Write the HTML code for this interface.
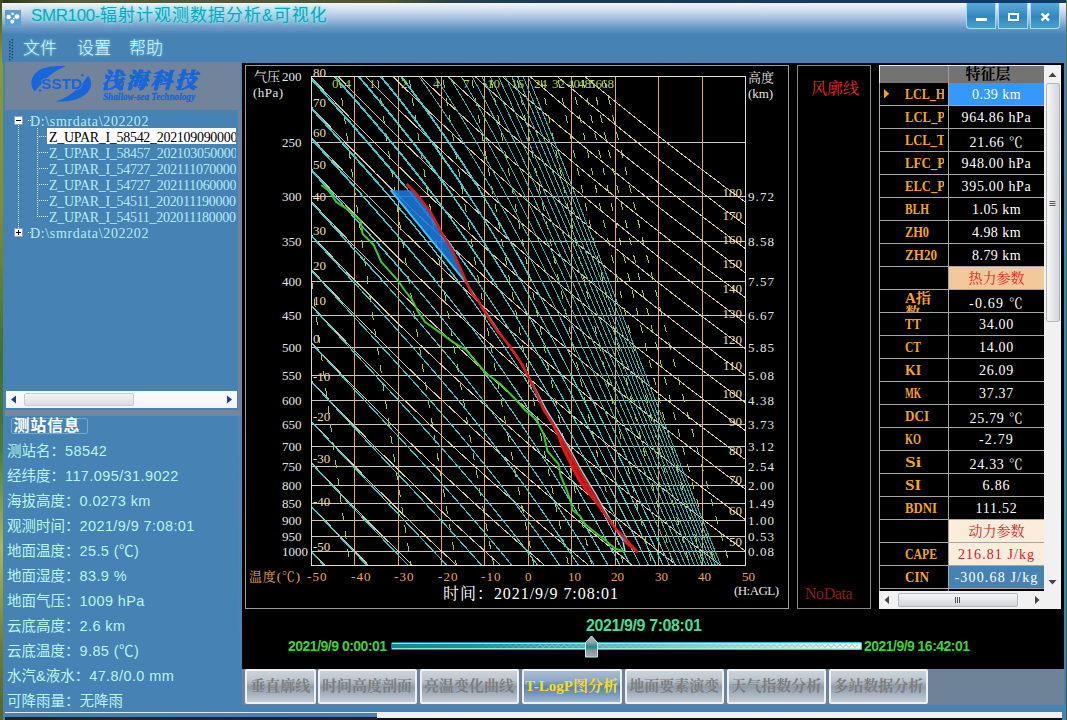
<!DOCTYPE html><html><head><meta charset="utf-8"><title>SMR100</title><style>
html,body{margin:0;padding:0}
body{width:1067px;height:720px;overflow:hidden;position:relative;background:#4682b4;font-family:'Liberation Sans','Noto Sans CJK SC',sans-serif}
.a{position:absolute}
.t{position:absolute;white-space:nowrap}
</style></head><body>
<div class="a" style="left:0;top:0;width:1067px;height:3px;background:linear-gradient(90deg,#2c3418 0,#58603a 6%,#4e5634 36%,#2a4048 42%,#173a5e 50%,#15386a 100%)"></div>
<div class="a" style="left:0;top:0;width:2.5px;height:720px;background:linear-gradient(#3a4a20 0,#8a9a38 8%,#7d8e34 30%,#3f6f34 50%,#4a7a38 62%,#a8b860 76%,#6d7d2c 90%,#55652c 100%)"></div>
<div class="a" style="left:1065.5px;top:0;width:2px;height:720px;background:linear-gradient(#5c7a2a,#4a5a3c)"></div>
<div class="a" style="left:2px;top:3px;width:1063.5px;height:31px;background:linear-gradient(#f4f7f0 0,#e4ecf4 10%,#c4d6ea 32%,#9dbadb 55%,#6a9ac8 78%,#4c86b8 100%)"></div>
<div class="a" style="left:5px;top:10px;width:16px;height:16px;background:#5d9fcb"></div>
<svg class="a" style="left:5px;top:10px" width="16" height="16"><circle cx="3.6" cy="7" r="2.2" fill="#fff"/><circle cx="12" cy="6.6" r="2.4" fill="#fff"/><circle cx="7.3" cy="11.6" r="2.1" fill="#e8f2fa"/><circle cx="7.6" cy="3.8" r="1.4" fill="#e8f2fa"/><circle cx="8.8" cy="8.6" r="1" fill="#dcebf6"/></svg>
<div class="t" style="left:31px;top:5px;font-size:17px;line-height:22px;color:#14a2ba;letter-spacing:1px;text-shadow:0 0 3px #7feaf4,0 0 4px #7feaf4"><span style="letter-spacing:-0.4px">SMR100-</span>辐射计观测数据分析<span style="letter-spacing:0;font-size:16px">&amp;</span><span style="margin-left:1px">可视化</span></div>
<div class="a" style="left:966px;top:3px;width:28px;height:25px;border:1px solid #9fe0f4;border-top:0;box-sizing:content-box;border-radius:0 0 0 4px;background:linear-gradient(#58acd8,#3a8ec4 45%,#3186be 55%,#4a9fd0)"></div>
<div class="a" style="left:998px;top:3px;width:28px;height:25px;border:1px solid #9fe0f4;border-top:0;box-sizing:content-box;border-radius:0;background:linear-gradient(#58acd8,#3a8ec4 45%,#3186be 55%,#4a9fd0)"></div>
<div class="a" style="left:1030px;top:3px;width:28px;height:25px;border:1px solid #9fe0f4;border-top:0;box-sizing:content-box;border-radius:0 0 4px 0;background:linear-gradient(#58acd8,#3a8ec4 45%,#3186be 55%,#4a9fd0)"></div>
<div class="a" style="left:976px;top:18px;width:11px;height:3px;background:#fff"></div>
<div class="a" style="left:1008px;top:13px;width:7px;height:4px;border:2px solid #fff"></div>
<svg class="a" style="left:1040px;top:13px" width="11" height="9"><path d="M1.500 0.500L9 7.500M9 0.500L1.500 7.500" stroke="#fff" stroke-width="2.400" fill="none"/></svg>
<div class="a" style="left:2px;top:34px;width:1063.5px;height:29px;background:#4682b4"></div>
<svg class="a" style="left:8px;top:38px" width="8" height="24"><rect x="1" y="3" width="1.4" height="1.4" fill="#1d3c66"/><rect x="3.6" y="1" width="1.4" height="1.4" fill="#1d3c66"/><rect x="1" y="6" width="1.4" height="1.4" fill="#1d3c66"/><rect x="3.6" y="4" width="1.4" height="1.4" fill="#1d3c66"/><rect x="1" y="9" width="1.4" height="1.4" fill="#1d3c66"/><rect x="3.6" y="7" width="1.4" height="1.4" fill="#1d3c66"/><rect x="1" y="12" width="1.4" height="1.4" fill="#1d3c66"/><rect x="3.6" y="10" width="1.4" height="1.4" fill="#1d3c66"/><rect x="1" y="15" width="1.4" height="1.4" fill="#1d3c66"/><rect x="3.6" y="13" width="1.4" height="1.4" fill="#1d3c66"/><rect x="1" y="18" width="1.4" height="1.4" fill="#1d3c66"/><rect x="3.6" y="16" width="1.4" height="1.4" fill="#1d3c66"/><rect x="1" y="21" width="1.4" height="1.4" fill="#1d3c66"/><rect x="3.6" y="19" width="1.4" height="1.4" fill="#1d3c66"/></svg>
<div class="t" style="left:23px;top:38px;font-size:17px;font-weight:300;line-height:22px;color:#d2f8ff;text-shadow:0 0 3px #8fe8ff">文件</div>
<div class="t" style="left:77px;top:38px;font-size:17px;font-weight:300;line-height:22px;color:#d2f8ff;text-shadow:0 0 3px #8fe8ff">设置</div>
<div class="t" style="left:129px;top:38px;font-size:17px;font-weight:300;line-height:22px;color:#d2f8ff;text-shadow:0 0 3px #8fe8ff">帮助</div>
<div class="a" style="left:5px;top:62px;width:236px;height:48px;background:#72849c"></div>
<div class="a" style="left:238px;top:110px;width:3.5px;height:602px;background:linear-gradient(#72849c 0,#72849c 50.5%,#5a84ae 51%,#4f83b2 80%,#4682b4 90%)"></div>
<svg class="a" style="left:5px;top:63px" width="236" height="47">
<g fill="#1766dc">
<path d="M29.7 28.4 C24.5 22 25 14 33 8 C40 3.600 50 2.800 61 3.200 C52 6.500 46 11 41.500 15.500 C37 20 33.500 24.500 29.700 28.400 Z"/>
<path d="M83 12.800 C87.500 17.500 88 25 80.500 31.500 C73 37.500 62 39 50.500 38.500 C59 36 66 31.500 71.500 26.500 C76.500 22 80 17 83 12.800 Z"/>
<circle cx="35" cy="27.600" r="1.25"/><circle cx="77.300" cy="12.200" r="1.25"/>
<text x="36" y="26.400" font-family="'Liberation Sans',sans-serif" font-size="15.500" font-weight="bold" textLength="41" stroke="#72849c" stroke-width="1.400" paint-order="stroke" stroke-linejoin="round">SSTD</text>
<text x="96.500" y="25" font-family="'Liberation Serif','Noto Serif CJK SC',serif" font-size="21.500" font-weight="900" font-style="italic" textLength="95" lengthAdjust="spacing" stroke="#1766dc" stroke-width="0.900">浅海科技</text>
<text x="98" y="37" font-family="'Liberation Serif',serif" font-size="10" font-weight="bold" font-style="italic" textLength="92" lengthAdjust="spacingAndGlyphs" stroke="#1766dc" stroke-width="0.300">Shallow-sea Technology</text>
</g></svg>
<div class="a" style="left:5px;top:110px;width:233px;height:281px;background:#4682b4;overflow:hidden"></div>
<svg class="a" style="left:5px;top:110px" width="233" height="281" shape-rendering="crispEdges"><path d="M13.5 15V122M23 10.5H27M32 26.500H43M32.500 18V107M32 42.500H43M32 58.500H43M32 74.500H43M32 90.500H43M32 106.500H43M23 122.500H27" stroke="#e6eef6" stroke-width="1" stroke-dasharray="1 1" fill="none"/><rect x="9.500" y="6.500" width="8" height="8" fill="#fff" stroke="#93a4b8"/><path d="M11 10.500H16" stroke="#000"/><rect x="9.500" y="118.500" width="8" height="8" fill="#fff" stroke="#93a4b8"/><path d="M11 122.500H16M13.500 120V125" stroke="#000"/></svg>
<div class="t" style="left:30px;top:114px;font-family:'Liberation Serif','Noto Serif CJK SC',serif;font-size:14px;line-height:16px;letter-spacing:-0.3px;letter-spacing:0.65px;color:#b4ecf6">D:\smrdata\202202</div>
<div class="a" style="left:47px;top:128px;width:189px;height:16px;background:#fff"></div>
<div class="t" style="left:49px;top:130px;width:187px;overflow:hidden;font-family:'Liberation Serif','Noto Serif CJK SC',serif;font-size:14px;line-height:16px;letter-spacing:-0.3px;color:#000">Z_UPAR_I_58542_202109090000</div>
<div class="t" style="left:49px;top:146px;width:187px;overflow:hidden;font-family:'Liberation Serif','Noto Serif CJK SC',serif;font-size:14px;line-height:16px;letter-spacing:-0.3px;color:#b4ecf6">Z_UPAR_I_58457_202103050000</div>
<div class="t" style="left:49px;top:162px;width:187px;overflow:hidden;font-family:'Liberation Serif','Noto Serif CJK SC',serif;font-size:14px;line-height:16px;letter-spacing:-0.3px;color:#b4ecf6">Z_UPAR_I_54727_202111070000</div>
<div class="t" style="left:49px;top:178px;width:187px;overflow:hidden;font-family:'Liberation Serif','Noto Serif CJK SC',serif;font-size:14px;line-height:16px;letter-spacing:-0.3px;color:#b4ecf6">Z_UPAR_I_54727_202111060000</div>
<div class="t" style="left:49px;top:194px;width:187px;overflow:hidden;font-family:'Liberation Serif','Noto Serif CJK SC',serif;font-size:14px;line-height:16px;letter-spacing:-0.3px;color:#b4ecf6">Z_UPAR_I_54511_202011190000</div>
<div class="t" style="left:49px;top:210px;width:187px;overflow:hidden;font-family:'Liberation Serif','Noto Serif CJK SC',serif;font-size:14px;line-height:16px;letter-spacing:-0.3px;color:#b4ecf6">Z_UPAR_I_54511_202011180000</div>
<div class="t" style="left:30px;top:226px;font-family:'Liberation Serif','Noto Serif CJK SC',serif;font-size:14px;line-height:16px;letter-spacing:-0.3px;letter-spacing:0.65px;color:#b4ecf6">D:\smrdata\202202</div>
<div class="a" style="left:6px;top:391px;width:231px;height:17px;background:linear-gradient(#fdfdfd,#f2f3f5)"></div>
<div class="a" style="left:24px;top:393px;width:110px;height:13px;border-radius:2px;border:1px solid #c9ccd2;box-sizing:border-box;background:linear-gradient(#f4f4f5,#dcdde0)"></div>
<svg class="a" style="left:6px;top:391px" width="231" height="17"><path d="M10 4.5L5 8.500L10 12.500Z M221 4.500L226 8.500L221 12.500Z" fill="#1f3f86"/></svg>
<div class="a" style="left:5px;top:410px;width:236px;height:5.5px;background:#77869d"></div>
<div class="a" style="left:11px;top:417.5px;width:77px;height:16px;border:1px solid #6fabca;box-sizing:border-box;border-radius:2px"></div>
<div class="t" style="left:13.5px;top:415px;font-size:16px;font-weight:bold;line-height:22px;color:#fff;letter-spacing:0.7px">测站信息</div>
<div class="t" style="left:7px;top:440px;font-size:14.5px;line-height:22px;color:#b8f6ee">测站名：<span style="letter-spacing:0.4px">58542</span></div>
<div class="t" style="left:7px;top:465px;font-size:14.5px;line-height:22px;color:#b8f6ee">经纬度：<span style="letter-spacing:0.4px">117.095/31.9022</span></div>
<div class="t" style="left:7px;top:490px;font-size:14.5px;line-height:22px;color:#b8f6ee">海拔高度：<span style="letter-spacing:0.4px">0.0273 km</span></div>
<div class="t" style="left:7px;top:515px;font-size:14.5px;line-height:22px;color:#b8f6ee">观测时间：<span style="letter-spacing:0.4px">2021/9/9 7:08:01</span></div>
<div class="t" style="left:7px;top:540px;font-size:14.5px;line-height:22px;color:#b8f6ee">地面温度：<span style="letter-spacing:0.4px">25.5 (℃)</span></div>
<div class="t" style="left:7px;top:565px;font-size:14.5px;line-height:22px;color:#b8f6ee">地面湿度：<span style="letter-spacing:0.4px">83.9 %</span></div>
<div class="t" style="left:7px;top:590px;font-size:14.5px;line-height:22px;color:#b8f6ee">地面气压：<span style="letter-spacing:0.4px">1009 hPa</span></div>
<div class="t" style="left:7px;top:615px;font-size:14.5px;line-height:22px;color:#b8f6ee">云底高度：<span style="letter-spacing:0.4px">2.6 km</span></div>
<div class="t" style="left:7px;top:640px;font-size:14.5px;line-height:22px;color:#b8f6ee">云底温度：<span style="letter-spacing:0.4px">9.85 (℃)</span></div>
<div class="t" style="left:7px;top:665px;font-size:14.5px;line-height:22px;color:#b8f6ee">水汽&amp;液水：<span style="letter-spacing:0.4px">47.8/0.0 mm</span></div>
<div class="t" style="left:7px;top:690px;font-size:14.5px;line-height:22px;color:#b8f6ee">可降雨量：无降雨</div>
<div class="a" style="left:242px;top:63px;width:822px;height:606px;background:#000"></div>
<div class="a" style="left:245px;top:65px;width:544px;height:544px;border:1px solid #9a9a9a;box-sizing:border-box"></div>
<div class="a" style="left:797px;top:65px;width:74px;height:544px;border:1px solid #8a8a8a;box-sizing:border-box"></div>
<div class="t" style="left:811px;top:78px;font-family:'Liberation Serif','Noto Serif CJK SC',serif;font-size:16px;line-height:22px;color:#e42a2a">风廓线</div>
<div class="t" style="left:805px;top:583px;font-family:'Liberation Serif','Noto Serif CJK SC',serif;font-size:16px;line-height:22px;color:#8e1c1c;letter-spacing:-0.45px">NoData</div>
<svg class="a" style="left:0;top:0" width="1067" height="720" font-family="'Liberation Serif','Noto Serif CJK SC',serif"><path d="M311.3 142.5H745.5M311.3 196.5H745.5M311.3 241.5H745.5M311.3 281.5H745.5M311.3 315.5H745.5M311.3 347.5H745.5M311.3 375.5H745.5M311.3 400.5H745.5M311.3 424.5H745.5M311.3 446.5H745.5M311.3 466.5H745.5M311.3 485.5H745.5M311.3 503.5H745.5M311.3 520.5H745.5M311.3 536.5H745.5M311.3 551.5H745.5" stroke="#ccc8c0" stroke-width="1" fill="none" shape-rendering="crispEdges"/>
<path d="M354.5 76.0V565.0M398.5 76.0V565.0M441.5 76.0V565.0M484.5 76.0V565.0M528.5 76.0V565.0M571.5 76.0V565.0M615.5 76.0V565.0M658.5 76.0V565.0M702.5 76.0V565.0" stroke="#eea25a" stroke-width="1" fill="none" shape-rendering="crispEdges"/>
<path d="M311.3 551.3L313.3 553.4L324.3 565.0M311.3 506.0L321.4 516.7L333.1 528.9L344.9 541.2L356.8 553.4L368.3 565.0M311.3 462.6L316.1 467.7L327.7 480.0L339.5 492.2L351.4 504.5L363.4 516.7L375.6 528.9L387.9 541.2L400.4 553.4L412.3 565.0M311.3 421.0L320.7 431.0L332.4 443.3L344.2 455.5L356.1 467.7L368.2 480.0L380.5 492.2L392.8 504.5L405.4 516.7L418.1 528.9L430.9 541.2L443.9 553.4L456.3 565.0M311.3 381.0L312.3 382.0L323.8 394.3L335.5 406.5L347.4 418.8L359.4 431.0L371.5 443.3L383.8 455.5L396.2 467.7L408.8 480.0L421.5 492.2L434.3 504.5L447.4 516.7L460.5 528.9L473.9 541.2L487.4 553.4L500.3 565.0M311.3 342.5L313.9 345.3L325.5 357.6L337.2 369.8L349.1 382.0L361.1 394.3L373.3 406.5L385.6 418.8L398.0 431.0L410.6 443.3L423.3 455.5L436.2 467.7L449.3 480.0L462.5 492.2L475.8 504.5L489.4 516.7L503.0 528.9L516.9 541.2L530.9 553.4L544.3 565.0M311.3 305.4L314.3 308.6L325.9 320.8L337.6 333.1L349.5 345.3L361.5 357.6L373.7 369.8L386.0 382.0L398.4 394.3L411.0 406.5L423.8 418.8L436.7 431.0L449.7 443.3L462.9 455.5L476.3 467.7L489.8 480.0L503.5 492.2L517.3 504.5L531.4 516.7L545.5 528.9L559.9 541.2L574.4 553.4L588.3 565.0M311.3 269.5L313.5 271.9L325.1 284.1L336.8 296.4L348.6 308.6L360.6 320.8L372.8 333.1L385.1 345.3L397.5 357.6L410.1 369.8L422.8 382.0L435.7 394.3L448.8 406.5L461.9 418.8L475.3 431.0L488.8 443.3L502.5 455.5L516.3 467.7L530.3 480.0L544.5 492.2L558.8 504.5L573.3 516.7L588.0 528.9L602.9 541.2L617.9 553.4L632.3 565.0M311.3 234.9L311.5 235.1L323.1 247.4L334.8 259.6L346.6 271.9L358.6 284.1L370.7 296.4L383.0 308.6L395.4 320.8L407.9 333.1L420.6 345.3L433.5 357.6L446.5 369.8L459.7 382.0L473.0 394.3L486.5 406.5L500.1 418.8L513.9 431.0L527.9 443.3L542.1 455.5L556.4 467.7L570.8 480.0L585.5 492.2L600.3 504.5L615.3 516.7L630.5 528.9L645.9 541.2L661.4 553.4L676.3 565.0M311.3 201.4L320.0 210.7L331.7 222.9L343.5 235.1L355.4 247.4L367.5 259.6L379.7 271.9L392.1 284.1L404.6 296.4L417.3 308.6L430.1 320.8L443.1 333.1L456.2 345.3L469.5 357.6L482.9 369.8L496.5 382.0L510.3 394.3L524.2 406.5L538.3 418.8L552.6 431.0L567.0 443.3L581.6 455.5L596.4 467.7L611.4 480.0L626.5 492.2L641.8 504.5L657.3 516.7L673.0 528.9L688.9 541.2L704.9 553.4L720.3 565.0M311.3 168.9L316.0 173.9L327.6 186.2L339.3 198.4L351.2 210.7L363.3 222.9L375.4 235.1L387.8 247.4L400.2 259.6L412.9 271.9L425.6 284.1L438.5 296.4L451.6 308.6L464.8 320.8L478.2 333.1L491.8 345.3L505.5 357.6L519.4 369.8L533.4 382.0L547.6 394.3L562.0 406.5L576.5 418.8L591.2 431.0L606.1 443.3L621.2 455.5L636.5 467.7L651.9 480.0L667.5 492.2L683.3 504.5L699.3 516.7L715.5 528.9L731.9 541.2L745.5 551.3M311.3 137.5L322.6 149.5L334.3 161.7L346.1 173.9L358.1 186.2L370.2 198.4L382.5 210.7L394.9 222.9L407.4 235.1L420.1 247.4L433.0 259.6L446.0 271.9L459.1 284.1L472.5 296.4L485.9 308.6L499.6 320.8L513.4 333.1L527.3 345.3L541.5 357.6L555.8 369.8L570.3 382.0L584.9 394.3L599.7 406.5L614.7 418.8L629.9 431.0L645.2 443.3L660.8 455.5L676.5 467.7L692.4 480.0L708.5 492.2L724.8 504.5L741.3 516.7L745.5 519.8M311.3 106.9L316.7 112.7L328.4 125.0L340.1 137.2L352.0 149.5L364.1 161.7L376.2 173.9L388.6 186.2L401.1 198.4L413.7 210.7L426.5 222.9L439.4 235.1L452.5 247.4L465.7 259.6L479.1 271.9L492.7 284.1L506.4 296.4L520.3 308.6L534.3 320.8L548.5 333.1L562.9 345.3L577.5 357.6L592.2 369.8L607.1 382.0L622.2 394.3L637.5 406.5L652.9 418.8L668.5 431.0L684.4 443.3L700.4 455.5L716.6 467.7L732.9 480.0L745.5 489.2M311.3 77.3L321.6 88.2L333.3 100.5L345.1 112.7L357.1 125.0L369.2 137.2L381.4 149.5L393.8 161.7L406.4 173.9L419.1 186.2L431.9 198.4L444.9 210.7L458.0 222.9L471.4 235.1L484.8 247.4L498.4 259.6L512.2 271.9L526.2 284.1L540.3 296.4L554.6 308.6L569.0 320.8L583.7 333.1L598.5 345.3L613.5 357.6L628.6 369.8L644.0 382.0L659.5 394.3L675.2 406.5L691.1 418.8L707.2 431.0L723.5 443.3L739.9 455.5L745.5 459.6M337.5 76.0L349.4 88.2L361.4 100.5L373.5 112.7L385.8 125.0L398.3 137.2L410.9 149.5L423.6 161.7L436.5 173.9L449.5 186.2L462.8 198.4L476.1 210.7L489.6 222.9L503.3 235.1L517.2 247.4L531.2 259.6L545.4 271.9L559.7 284.1L574.2 296.4L588.9 308.6L603.8 320.8L618.8 333.1L634.1 345.3L649.5 357.6L665.0 369.8L680.8 382.0L696.8 394.3L712.9 406.5L729.3 418.8L745.5 430.8M364.9 76.0L377.1 88.2L389.4 100.5L401.9 112.7L414.6 125.0L427.3 137.2L440.3 149.5L453.4 161.7L466.6 173.9L480.0 186.2L493.6 198.4L507.3 210.7L521.2 222.9L535.3 235.1L549.5 247.4L563.9 259.6L578.5 271.9L593.2 284.1L608.1 296.4L623.2 308.6L638.5 320.8L654.0 333.1L669.6 345.3L685.5 357.6L701.5 369.8L717.7 382.0L734.1 394.3L745.5 402.7M392.3 76.0L404.8 88.2L417.5 100.5L430.3 112.7L443.3 125.0L456.4 137.2L469.7 149.5L483.2 161.7L496.8 173.9L510.5 186.2L524.5 198.4L538.6 210.7L552.8 222.9L567.3 235.1L581.9 247.4L596.7 259.6L611.6 271.9L626.7 284.1L642.1 296.4L657.6 308.6L673.3 320.8L689.1 333.1L705.2 345.3L721.4 357.6L737.9 369.8L745.5 375.4M419.7 76.0L432.5 88.2L445.5 100.5L458.7 112.7L472.0 125.0L485.5 137.2L499.1 149.5L512.9 161.7L526.9 173.9L541.0 186.2L555.3 198.4L569.8 210.7L584.4 222.9L599.2 235.1L614.2 247.4L629.4 259.6L644.7 271.9L660.3 284.1L676.0 296.4L691.9 308.6L708.0 320.8L724.3 333.1L740.8 345.3L745.5 348.8M447.1 76.0L460.3 88.2L473.6 100.5L487.1 112.7L500.8 125.0L514.6 137.2L528.5 149.5L542.7 161.7L557.0 173.9L571.5 186.2L586.2 198.4L601.0 210.7L616.0 222.9L631.2 235.1L646.6 247.4L662.1 259.6L677.9 271.9L693.8 284.1L709.9 296.4L726.2 308.6L742.7 320.8L745.5 322.9M474.5 76.0L488.0 88.2L501.7 100.5L515.5 112.7L529.5 125.0L543.6 137.2L558.0 149.5L572.5 161.7L587.1 173.9L602.0 186.2L617.0 198.4L632.2 210.7L647.6 222.9L663.2 235.1L678.9 247.4L694.9 259.6L711.0 271.9L727.3 284.1L743.8 296.4L745.5 297.6M501.9 76.0L515.7 88.2L529.7 100.5L543.9 112.7L558.2 125.0L572.7 137.2L587.4 149.5L602.2 161.7L617.3 173.9L632.5 186.2L647.9 198.4L663.4 210.7L679.2 222.9L695.1 235.1L711.3 247.4L727.6 259.6L744.1 271.9L745.5 272.9M529.3 76.0L543.5 88.2L557.8 100.5L572.3 112.7L587.0 125.0L601.8 137.2L616.8 149.5L632.0 161.7L647.4 173.9L663.0 186.2L678.7 198.4L694.7 210.7L710.8 222.9L727.1 235.1L743.6 247.4L745.5 248.8M556.7 76.0L571.2 88.2L585.8 100.5L600.7 112.7L615.7 125.0L630.9 137.2L646.2 149.5L661.8 161.7L677.5 173.9L693.5 186.2L709.6 198.4L725.9 210.7L742.4 222.9L745.5 225.2M584.1 76.0L598.9 88.2L613.9 100.5L629.1 112.7L644.4 125.0L659.9 137.2L675.7 149.5L691.6 161.7L707.7 173.9L723.9 186.2L740.4 198.4L745.5 202.2" stroke="#d8c8a2" stroke-width="1" fill="none" shape-rendering="crispEdges"/>
<path d="M311.3 277.3L312.2 284.1L313.7 296.4L315.3 308.6L316.9 320.8L318.5 333.1L320.1 345.3L321.7 357.6L323.3 369.8L324.9 382.0L326.5 394.3L328.2 406.5L329.8 418.8L331.4 431.0L333.1 443.3L334.7 455.5L336.4 467.7L338.1 480.0L339.7 492.2L341.4 504.5L343.1 516.7L344.8 528.9L346.5 541.2L348.2 553.4L349.8 565.0M338.8 76.0L340.4 88.2L342.1 100.5L343.8 112.7L345.5 125.0L347.2 137.2L348.9 149.5L350.6 161.7L352.3 173.9L354.1 186.2L355.8 198.4L357.5 210.7L359.3 222.9L361.0 235.1L362.8 247.4L364.6 259.6L366.4 271.9L368.1 284.1L369.9 296.4L371.7 308.6L373.5 320.8L375.3 333.1L377.2 345.3L379.0 357.6L380.8 369.8L382.6 382.0L384.5 394.3L386.4 406.5L388.2 418.8L390.1 431.0L392.0 443.3L393.8 455.5L395.7 467.7L397.6 480.0L399.5 492.2L401.5 504.5L403.4 516.7L405.3 528.9L407.3 541.2L409.2 553.4L411.1 565.0M377.3 76.0L379.1 88.2L381.0 100.5L382.8 112.7L384.6 125.0L386.5 137.2L388.4 149.5L390.2 161.7L392.1 173.9L394.0 186.2L395.9 198.4L397.8 210.7L399.7 222.9L401.6 235.1L403.5 247.4L405.5 259.6L407.4 271.9L409.4 284.1L411.3 296.4L413.3 308.6L415.3 320.8L417.2 333.1L419.2 345.3L421.2 357.6L423.2 369.8L425.3 382.0L427.3 394.3L429.3 406.5L431.4 418.8L433.4 431.0L435.5 443.3L437.5 455.5L439.6 467.7L441.7 480.0L443.8 492.2L445.9 504.5L448.0 516.7L450.1 528.9L452.3 541.2L454.4 553.4L456.4 565.0M408.7 76.0L410.7 88.2L412.7 100.5L414.6 112.7L416.6 125.0L418.6 137.2L420.6 149.5L422.6 161.7L424.6 173.9L426.6 186.2L428.7 198.4L430.7 210.7L432.8 222.9L434.8 235.1L436.9 247.4L439.0 259.6L441.0 271.9L443.1 284.1L445.2 296.4L447.3 308.6L449.5 320.8L451.6 333.1L453.7 345.3L455.9 357.6L458.0 369.8L460.2 382.0L462.4 394.3L464.6 406.5L466.7 418.8L469.0 431.0L471.2 443.3L473.4 455.5L475.6 467.7L477.9 480.0L480.1 492.2L482.4 504.5L484.7 516.7L486.9 528.9L489.2 541.2L491.5 553.4L493.7 565.0M442.4 76.0L444.5 88.2L446.6 100.5L448.7 112.7L450.8 125.0L453.0 137.2L455.1 149.5L457.3 161.7L459.4 173.9L461.6 186.2L463.8 198.4L466.0 210.7L468.2 222.9L470.4 235.1L472.6 247.4L474.8 259.6L477.1 271.9L479.3 284.1L481.6 296.4L483.8 308.6L486.1 320.8L488.4 333.1L490.7 345.3L493.0 357.6L495.4 369.8L497.7 382.0L500.0 394.3L502.4 406.5L504.8 418.8L507.1 431.0L509.5 443.3L511.9 455.5L514.3 467.7L516.7 480.0L519.2 492.2L521.6 504.5L524.1 516.7L526.5 528.9L529.0 541.2L531.5 553.4L533.9 565.0M471.2 76.0L473.5 88.2L475.7 100.5L477.9 112.7L480.2 125.0L482.4 137.2L484.7 149.5L487.0 161.7L489.3 173.9L491.6 186.2L493.9 198.4L496.3 210.7L498.6 222.9L500.9 235.1L503.3 247.4L505.7 259.6L508.0 271.9L510.4 284.1L512.8 296.4L515.3 308.6L517.7 320.8L520.1 333.1L522.6 345.3L525.0 357.6L527.5 369.8L530.0 382.0L532.5 394.3L535.0 406.5L537.5 418.8L540.0 431.0L542.6 443.3L545.1 455.5L547.7 467.7L550.3 480.0L552.8 492.2L555.4 504.5L558.1 516.7L560.7 528.9L563.3 541.2L566.0 553.4L568.5 565.0M490.4 76.0L492.7 88.2L495.1 100.5L497.4 112.7L499.7 125.0L502.1 137.2L504.5 149.5L506.8 161.7L509.2 173.9L511.6 186.2L514.0 198.4L516.4 210.7L518.9 222.9L521.3 235.1L523.8 247.4L526.2 259.6L528.7 271.9L531.2 284.1L533.7 296.4L536.2 308.6L538.7 320.8L541.3 333.1L543.8 345.3L546.4 357.6L548.9 369.8L551.5 382.0L554.1 394.3L556.7 406.5L559.3 418.8L562.0 431.0L564.6 443.3L567.3 455.5L570.0 467.7L572.6 480.0L575.3 492.2L578.1 504.5L580.8 516.7L583.5 528.9L586.3 541.2L589.0 553.4L591.7 565.0M516.7 76.0L519.1 88.2L521.6 100.5L524.0 112.7L526.5 125.0L529.0 137.2L531.5 149.5L534.0 161.7L536.5 173.9L539.0 186.2L541.5 198.4L544.1 210.7L546.6 222.9L549.2 235.1L551.8 247.4L554.4 259.6L557.0 271.9L559.6 284.1L562.3 296.4L564.9 308.6L567.6 320.8L570.3 333.1L572.9 345.3L575.6 357.6L578.4 369.8L581.1 382.0L583.8 394.3L586.6 406.5L589.3 418.8L592.1 431.0L594.9 443.3L597.7 455.5L600.6 467.7L603.4 480.0L606.2 492.2L609.1 504.5L612.0 516.7L614.9 528.9L617.8 541.2L620.7 553.4L623.5 565.0M540.2 76.0L542.8 88.2L545.3 100.5L547.9 112.7L550.5 125.0L553.1 137.2L555.7 149.5L558.3 161.7L560.9 173.9L563.5 186.2L566.2 198.4L568.9 210.7L571.5 222.9L574.2 235.1L576.9 247.4L579.7 259.6L582.4 271.9L585.1 284.1L587.9 296.4L590.7 308.6L593.5 320.8L596.3 333.1L599.1 345.3L601.9 357.6L604.8 369.8L607.6 382.0L610.5 394.3L613.4 406.5L616.3 418.8L619.2 431.0L622.1 443.3L625.1 455.5L628.0 467.7L631.0 480.0L634.0 492.2L637.0 504.5L640.0 516.7L643.1 528.9L646.1 541.2L649.2 553.4L652.1 565.0M557.3 76.0L560.0 88.2L562.6 100.5L565.2 112.7L567.9 125.0L570.6 137.2L573.3 149.5L576.0 161.7L578.7 173.9L581.4 186.2L584.2 198.4L586.9 210.7L589.7 222.9L592.5 235.1L595.3 247.4L598.1 259.6L600.9 271.9L603.7 284.1L606.6 296.4L609.5 308.6L612.3 320.8L615.2 333.1L618.2 345.3L621.1 357.6L624.0 369.8L627.0 382.0L630.0 394.3L632.9 406.5L635.9 418.8L639.0 431.0L642.0 443.3L645.0 455.5L648.1 467.7L651.2 480.0L654.3 492.2L657.4 504.5L660.5 516.7L663.7 528.9L666.9 541.2L670.0 553.4L673.1 565.0M570.8 76.0L573.5 88.2L576.2 100.5L578.9 112.7L581.7 125.0L584.4 137.2L587.2 149.5L589.9 161.7L592.7 173.9L595.5 186.2L598.3 198.4L601.2 210.7L604.0 222.9L606.9 235.1L609.7 247.4L612.6 259.6L615.5 271.9L618.4 284.1L621.3 296.4L624.3 308.6L627.2 320.8L630.2 333.1L633.2 345.3L636.2 357.6L639.2 369.8L642.3 382.0L645.3 394.3L648.4 406.5L651.5 418.8L654.6 431.0L657.7 443.3L660.8 455.5L664.0 467.7L667.1 480.0L670.3 492.2L673.5 504.5L676.7 516.7L680.0 528.9L683.2 541.2L686.5 553.4L689.6 565.0M582.0 76.0L584.7 88.2L587.5 100.5L590.2 112.7L593.0 125.0L595.8 137.2L598.6 149.5L601.5 161.7L604.3 173.9L607.2 186.2L610.0 198.4L612.9 210.7L615.8 222.9L618.7 235.1L621.7 247.4L624.6 259.6L627.6 271.9L630.5 284.1L633.5 296.4L636.5 308.6L639.6 320.8L642.6 333.1L645.7 345.3L648.7 357.6L651.8 369.8L654.9 382.0L658.0 394.3L661.2 406.5L664.3 418.8L667.5 431.0L670.7 443.3L673.9 455.5L677.1 467.7L680.3 480.0L683.6 492.2L686.8 504.5L690.1 516.7L693.4 528.9L696.8 541.2L700.1 553.4L703.3 565.0M591.4 76.0L594.2 88.2L597.0 100.5L599.9 112.7L602.7 125.0L605.5 137.2L608.4 149.5L611.3 161.7L614.2 173.9L617.1 186.2L620.0 198.4L622.9 210.7L625.9 222.9L628.9 235.1L631.8 247.4L634.8 259.6L637.8 271.9L640.9 284.1L643.9 296.4L647.0 308.6L650.1 320.8L653.1 333.1L656.3 345.3L659.4 357.6L662.5 369.8L665.7 382.0L668.9 394.3L672.0 406.5L675.3 418.8L678.5 431.0L681.7 443.3L685.0 455.5L688.3 467.7L691.6 480.0L694.9 492.2L698.2 504.5L701.6 516.7L704.9 528.9L708.3 541.2L711.7 553.4L715.0 565.0M603.4 76.0L606.3 88.2L609.1 100.5L612.0 112.7L614.9 125.0L617.8 137.2L620.8 149.5L623.7 161.7L626.7 173.9L629.6 186.2L632.6 198.4L635.6 210.7L638.6 222.9L641.7 235.1L644.7 247.4L647.8 259.6L650.9 271.9L654.0 284.1L657.1 296.4L660.2 308.6L663.3 320.8L666.5 333.1L669.7 345.3L672.9 357.6L676.1 369.8L679.3 382.0L682.6 394.3L685.8 406.5L689.1 418.8L692.4 431.0L695.7 443.3L699.1 455.5L702.4 467.7L705.8 480.0L709.2 492.2L712.6 504.5L716.0 516.7L719.5 528.9L723.0 541.2L726.4 553.4L729.8 565.0" stroke="#a8c850" stroke-width="1" fill="none" stroke-dasharray="8 10" stroke-dashoffset="-4" shape-rendering="crispEdges"/>
<path d="M311.3 170.0L311.3 170.0L318.4 177.9L325.5 185.7M311.3 138.7L311.3 138.7L318.4 146.5L325.4 154.4L332.5 162.2L339.5 170.0L346.6 177.9L353.6 185.7M311.3 108.3L317.5 115.2L324.5 123.0L331.5 130.9L338.5 138.7L345.5 146.5L352.5 154.4L359.5 162.2L366.4 170.0L373.3 177.9L380.1 185.7M311.3 78.8L315.8 83.8L322.8 91.7L329.7 99.5L336.7 107.3L343.7 115.2L350.6 123.0L357.5 130.9L364.3 138.7L371.2 146.5L377.9 154.4L384.6 162.2L391.3 170.0L397.9 177.9L404.4 185.7M334.2 76.0L341.1 83.8L347.9 91.7L354.8 99.5L361.6 107.3L368.4 115.2L375.1 123.0L381.7 130.9L388.3 138.7L394.8 146.5L401.2 154.4L407.6 162.2L413.9 170.0L420.1 177.9L426.2 185.7M358.2 76.0L364.9 83.8L371.5 91.7L378.1 99.5L384.7 107.3L391.1 115.2L397.5 123.0L403.8 130.9L410.0 138.7L416.1 146.5L422.1 154.4L428.1 162.2L434.0 170.0L439.7 177.9L445.4 185.7M380.4 76.0L386.8 83.8L393.2 91.7L399.4 99.5L405.6 107.3L411.6 115.2L417.6 123.0L423.5 130.9L429.3 138.7L435.0 146.5L440.6 154.4L446.1 162.2L451.6 170.0L457.0 177.9L462.2 185.7M400.6 76.0L406.7 83.8L412.6 91.7L418.4 99.5L424.2 107.3L429.8 115.2L435.4 123.0L440.9 130.9L446.3 138.7L451.6 146.5L456.8 154.4L461.9 162.2L467.0 170.0L472.0 177.9L476.9 185.7" stroke="#40c8d0" stroke-width="1.9" fill="none" shape-rendering="crispEdges"/>
<path d="M311.3 270.3L314.6 273.9L320.8 280.7M311.3 235.7L315.2 240.0L321.3 246.8L327.5 253.6L333.8 260.3L340.0 267.1L346.2 273.9L352.4 280.7M311.3 202.3L314.7 206.1L320.8 212.9L327.0 219.6L333.2 226.4L339.4 233.2L345.6 240.0L351.7 246.8L357.9 253.6L364.1 260.3L370.2 267.1L376.4 273.9L382.5 280.7M325.5 185.7L331.7 192.5L337.8 199.3L343.9 206.1L350.1 212.9L356.2 219.6L362.3 226.4L368.4 233.2L374.5 240.0L380.6 246.8L386.6 253.6L392.6 260.3L398.5 267.1L404.4 273.9L410.3 280.7M353.6 185.7L359.7 192.5L365.7 199.3L371.8 206.1L377.8 212.9L383.7 219.6L389.7 226.4L395.6 233.2L401.4 240.0L407.2 246.8L412.9 253.6L418.6 260.3L424.3 267.1L429.9 273.9L435.4 280.7M380.1 185.7L386.0 192.5L391.8 199.3L397.6 206.1L403.3 212.9L409.0 219.6L414.6 226.4L420.2 233.2L425.7 240.0L431.2 246.8L436.6 253.6L441.9 260.3L447.2 267.1L452.4 273.9L457.5 280.7M404.4 185.7L410.0 192.5L415.5 199.3L420.9 206.1L426.3 212.9L431.7 219.6L436.9 226.4L442.1 233.2L447.3 240.0L452.3 246.8L457.3 253.6L462.3 260.3L467.2 267.1L472.0 273.9L476.7 280.7M426.2 185.7L431.4 192.5L436.5 199.3L441.6 206.1L446.7 212.9L451.6 219.6L456.5 226.4L461.3 233.2L466.1 240.0L470.8 246.8L475.4 253.6L480.0 260.3L484.5 267.1L489.0 273.9L493.4 280.7M445.4 185.7L450.3 192.5L455.0 199.3L459.8 206.1L464.4 212.9L469.0 219.6L473.6 226.4L478.0 233.2L482.5 240.0L486.8 246.8L491.1 253.6L495.4 260.3L499.6 267.1L503.8 273.9L507.9 280.7M462.2 185.7L466.7 192.5L471.2 199.3L475.6 206.1L479.9 212.9L484.2 219.6L488.4 226.4L492.6 233.2L496.7 240.0L500.8 246.8L504.8 253.6L508.8 260.3L512.8 267.1L516.7 273.9L520.6 280.7M476.9 185.7L481.1 192.5L485.3 199.3L489.4 206.1L493.4 212.9L497.4 219.6L501.4 226.4L505.3 233.2L509.2 240.0L513.0 246.8L516.8 253.6L520.6 260.3L524.3 267.1L528.0 273.9L531.7 280.7" stroke="#40c8d0" stroke-width="1.5" fill="none" shape-rendering="crispEdges"/>
<path d="M311.3 551.7L323.6 565.0M311.3 506.5L328.5 525.0L347.7 545.3L366.5 565.0M311.3 463.1L312.0 463.9L330.9 484.2L350.1 504.6L369.4 525.0L388.9 545.3L407.8 565.0M311.3 421.5L312.8 423.2L331.7 443.5L350.8 463.9L370.1 484.2L389.4 504.6L408.7 525.0L428.0 545.3L446.4 565.0M311.3 381.6L312.1 382.5L331.0 402.8L350.0 423.2L369.1 443.5L388.3 463.9L407.5 484.2L426.5 504.6L445.3 525.0L463.8 545.3L481.3 565.0M311.3 343.1L328.8 362.1L347.7 382.5L366.8 402.8L385.8 423.2L404.8 443.5L423.6 463.9L442.2 484.2L460.4 504.6L478.1 525.0L495.4 545.3L511.6 565.0M311.3 306.0L325.4 321.4L344.2 341.8L363.1 362.1L382.0 382.5L400.8 402.8L419.5 423.2L437.8 443.5L455.7 463.9L473.2 484.2L490.2 504.6L506.7 525.0L522.6 545.3L537.6 565.0M320.8 280.7L339.5 301.0L358.3 321.4L377.1 341.8L395.7 362.1L414.2 382.5L432.3 402.8L450.0 423.2L467.3 443.5L484.0 463.9L500.2 484.2L515.9 504.6L531.1 525.0L545.8 545.3L559.5 565.0M352.4 280.7L371.1 301.0L389.6 321.4L407.9 341.8L425.8 362.1L443.4 382.5L460.4 402.8L477.0 423.2L493.0 443.5L508.4 463.9L523.4 484.2L537.8 504.6L551.8 525.0L565.4 545.3L578.2 565.0M382.5 280.7L400.6 301.0L418.5 321.4L435.9 341.8L452.8 362.1L469.2 382.5L485.0 402.8L500.3 423.2L515.1 443.5L529.3 463.9L543.1 484.2L556.5 504.6L569.5 525.0L582.2 545.3L594.1 565.0M410.3 280.7L427.6 301.0L444.4 321.4L460.7 341.8L476.4 362.1L491.6 382.5L506.2 402.8L520.3 423.2L534.0 443.5L547.2 463.9L560.0 484.2L572.5 504.6L584.7 525.0L596.6 545.3L607.9 565.0M435.4 280.7L451.6 301.0L467.2 321.4L482.3 341.8L496.8 362.1L510.8 382.5L524.4 402.8L537.5 423.2L550.2 443.5L562.5 463.9L574.6 484.2L586.3 504.6L597.9 525.0L609.2 545.3L619.9 565.0M457.5 280.7L472.5 301.0L487.0 321.4L500.9 341.8L514.4 362.1L527.4 382.5L540.0 402.8L552.3 423.2L564.2 443.5L575.8 463.9L587.2 484.2L598.4 504.6L609.4 525.0L620.2 545.3L630.5 565.0M476.7 280.7L490.7 301.0L504.1 321.4L517.0 341.8L529.6 362.1L541.7 382.5L553.6 402.8L565.1 423.2L576.4 443.5L587.5 463.9L598.4 484.2L609.1 504.6L619.6 525.0L630.0 545.3L640.0 565.0M493.4 280.7L506.4 301.0L518.9 321.4L531.0 341.8L542.8 362.1L554.2 382.5L565.5 402.8L576.4 423.2L587.2 443.5L597.8 463.9L608.2 484.2L618.5 504.6L628.7 525.0L638.8 545.3L648.4 565.0M507.9 280.7L520.0 301.0L531.8 321.4L543.2 341.8L554.3 362.1L565.2 382.5L575.9 402.8L586.4 423.2L596.7 443.5L606.9 463.9L617.0 484.2L627.0 504.6L636.8 525.0L646.6 545.3L656.1 565.0M520.6 280.7L532.0 301.0L543.1 321.4L553.9 341.8L564.5 362.1L575.0 382.5L585.2 402.8L595.3 423.2L605.3 443.5L615.2 463.9L624.9 484.2L634.6 504.6L644.2 525.0L653.8 545.3L663.0 565.0M531.7 280.7L542.5 301.0L553.1 321.4L563.5 341.8L573.6 362.1L583.7 382.5L593.6 402.8L603.3 423.2L613.0 443.5L622.6 463.9L632.1 484.2L641.5 504.6L650.9 525.0L660.3 545.3L669.3 565.0" stroke="#40c6ce" stroke-width="1.15" fill="none" shape-rendering="crispEdges"/>
<path d="M418.7 76.0L427.4 88.2L435.9 100.5L444.2 112.7L452.3 125.0L460.2 137.2L467.9 149.5L475.5 161.7L482.8 173.9L490.0 186.2L497.1 198.4L504.0 210.7L510.8 222.9L517.5 235.1L524.1 247.4L530.6 259.6L537.0 271.9L543.3 284.1L549.5 296.4L555.7 308.6L561.7 320.8L567.8 333.1L573.7 345.3L579.6 357.6L585.5 369.8L591.3 382.0L597.1 394.3L602.8 406.5L608.5 418.8L614.2 431.0L619.9 443.3L625.5 455.5L631.1 467.7L636.7 480.0L642.2 492.2L647.8 504.5L653.3 516.7L658.9 528.9L664.4 541.2L669.9 553.4L675.1 565.0M434.6 76.0L442.7 88.2L450.6 100.5L458.4 112.7L465.9 125.0L473.3 137.2L480.5 149.5L487.6 161.7L494.5 173.9L501.3 186.2L508.0 198.4L514.6 210.7L521.0 222.9L527.4 235.1L533.7 247.4L539.8 259.6L546.0 271.9L552.0 284.1L558.0 296.4L563.9 308.6L569.8 320.8L575.6 333.1L581.3 345.3L587.1 357.6L592.7 369.8L598.4 382.0L604.0 394.3L609.6 406.5L615.2 418.8L620.7 431.0L626.2 443.3L631.7 455.5L637.2 467.7L642.7 480.0L648.2 492.2L653.6 504.5L659.1 516.7L664.5 528.9L669.9 541.2L675.3 553.4L680.5 565.0M448.6 76.0L456.2 88.2L463.6 100.5L470.8 112.7L477.9 125.0L484.9 137.2L491.7 149.5L498.3 161.7L504.9 173.9L511.3 186.2L517.7 198.4L523.9 210.7L530.1 222.9L536.2 235.1L542.2 247.4L548.1 259.6L554.0 271.9L559.8 284.1L565.6 296.4L571.3 308.6L577.0 320.8L582.7 333.1L588.3 345.3L593.8 357.6L599.4 369.8L604.9 382.0L610.3 394.3L615.8 406.5L621.2 418.8L626.7 431.0L632.1 443.3L637.5 455.5L642.9 467.7L648.2 480.0L653.6 492.2L659.0 504.5L664.3 516.7L669.7 528.9L675.0 541.2L680.4 553.4L685.4 565.0M460.9 76.0L468.0 88.2L475.0 100.5L481.8 112.7L488.5 125.0L495.1 137.2L501.5 149.5L507.9 161.7L514.1 173.9L520.3 186.2L526.3 198.4L532.3 210.7L538.2 222.9L544.1 235.1L549.9 247.4L555.6 259.6L561.3 271.9L566.9 284.1L572.5 296.4L578.1 308.6L583.6 320.8L589.1 333.1L594.6 345.3L600.0 357.6L605.4 369.8L610.8 382.0L616.1 394.3L621.5 406.5L626.8 418.8L632.1 431.0L637.5 443.3L642.8 455.5L648.1 467.7L653.3 480.0L658.6 492.2L663.9 504.5L669.2 516.7L674.5 528.9L679.8 541.2L685.0 553.4L690.0 565.0M471.8 76.0L478.5 88.2L485.1 100.5L491.6 112.7L497.9 125.0L504.2 137.2L510.3 149.5L516.4 161.7L522.4 173.9L528.3 186.2L534.1 198.4L539.9 210.7L545.6 222.9L551.2 235.1L556.8 247.4L562.4 259.6L567.9 271.9L573.4 284.1L578.8 296.4L584.3 308.6L589.6 320.8L595.0 333.1L600.3 345.3L605.6 357.6L610.9 369.8L616.2 382.0L621.5 394.3L626.7 406.5L632.0 418.8L637.2 431.0L642.4 443.3L647.7 455.5L652.9 467.7L658.1 480.0L663.3 492.2L668.5 504.5L673.7 516.7L678.9 528.9L684.2 541.2L689.4 553.4L694.3 565.0M481.5 76.0L487.9 88.2L494.2 100.5L500.3 112.7L506.4 125.0L512.4 137.2L518.3 149.5L524.1 161.7L529.8 173.9L535.5 186.2L541.2 198.4L546.7 210.7L552.3 222.9L557.8 235.1L563.2 247.4L568.6 259.6L574.0 271.9L579.3 284.1L584.6 296.4L589.9 308.6L595.2 320.8L600.4 333.1L605.7 345.3L610.9 357.6L616.1 369.8L621.3 382.0L626.4 394.3L631.6 406.5L636.8 418.8L641.9 431.0L647.1 443.3L652.2 455.5L657.4 467.7L662.5 480.0L667.7 492.2L672.8 504.5L678.0 516.7L683.1 528.9L688.3 541.2L693.5 553.4L698.4 565.0M490.2 76.0L496.3 88.2L502.3 100.5L508.2 112.7L514.0 125.0L519.7 137.2L525.4 149.5L531.0 161.7L536.6 173.9L542.1 186.2L547.6 198.4L553.0 210.7L558.4 222.9L563.7 235.1L569.0 247.4L574.3 259.6L579.5 271.9L584.8 284.1L590.0 296.4L595.1 308.6L600.3 320.8L605.4 333.1L610.6 345.3L615.7 357.6L620.8 369.8L625.9 382.0L631.0 394.3L636.1 406.5L641.2 418.8L646.3 431.0L651.4 443.3L656.5 455.5L661.5 467.7L666.6 480.0L671.7 492.2L676.8 504.5L681.9 516.7L687.0 528.9L692.1 541.2L697.3 553.4L702.1 565.0M498.0 76.0L503.8 88.2L509.6 100.5L515.3 112.7L520.9 125.0L526.4 137.2L531.9 149.5L537.4 161.7L542.8 173.9L548.1 186.2L553.4 198.4L558.7 210.7L564.0 222.9L569.2 235.1L574.4 247.4L579.5 259.6L584.7 271.9L589.8 284.1L594.9 296.4L600.0 308.6L605.0 320.8L610.1 333.1L615.2 345.3L620.2 357.6L625.2 369.8L630.3 382.0L635.3 394.3L640.3 406.5L645.3 418.8L650.4 431.0L655.4 443.3L660.4 455.5L665.5 467.7L670.5 480.0L675.5 492.2L680.6 504.5L685.6 516.7L690.7 528.9L695.8 541.2L700.9 553.4L705.7 565.0M505.1 76.0L510.7 88.2L516.2 100.5L521.7 112.7L527.2 125.0L532.5 137.2L537.9 149.5L543.2 161.7L548.4 173.9L553.6 186.2L558.8 198.4L564.0 210.7L569.1 222.9L574.2 235.1L579.3 247.4L584.4 259.6L589.4 271.9L594.4 284.1L599.5 296.4L604.5 308.6L609.4 320.8L614.4 333.1L619.4 345.3L624.4 357.6L629.4 369.8L634.3 382.0L639.3 394.3L644.3 406.5L649.2 418.8L654.2 431.0L659.2 443.3L664.1 455.5L669.1 467.7L674.1 480.0L679.1 492.2L684.1 504.5L689.1 516.7L694.2 528.9L699.2 541.2L704.2 553.4L709.0 565.0M511.5 76.0L516.9 88.2L522.3 100.5L527.6 112.7L532.9 125.0L538.2 137.2L543.3 149.5L548.5 161.7L553.6 173.9L558.7 186.2L563.8 198.4L568.9 210.7L573.9 222.9L578.9 235.1L583.9 247.4L588.9 259.6L593.8 271.9L598.8 284.1L603.7 296.4L608.6 308.6L613.6 320.8L618.5 333.1L623.4 345.3L628.3 357.6L633.2 369.8L638.1 382.0L643.0 394.3L647.9 406.5L652.9 418.8L657.8 431.0L662.7 443.3L667.6 455.5L672.6 467.7L677.5 480.0L682.5 492.2L687.4 504.5L692.4 516.7L697.4 528.9L702.4 541.2L707.4 553.4L712.2 565.0M517.4 76.0L522.6 88.2L527.9 100.5L533.1 112.7L538.2 125.0L543.3 137.2L548.4 149.5L553.4 161.7L558.5 173.9L563.5 186.2L568.4 198.4L573.4 210.7L578.3 222.9L583.2 235.1L588.2 247.4L593.1 259.6L597.9 271.9L602.8 284.1L607.7 296.4L612.6 308.6L617.4 320.8L622.3 333.1L627.1 345.3L632.0 357.6L636.8 369.8L641.7 382.0L646.6 394.3L651.4 406.5L656.3 418.8L661.2 431.0L666.0 443.3L670.9 455.5L675.8 467.7L680.7 480.0L685.7 492.2L690.6 504.5L695.5 516.7L700.5 528.9L705.5 541.2L710.4 553.4L715.2 565.0M522.8 76.0L527.9 88.2L533.0 100.5L538.1 112.7L543.1 125.0L548.1 137.2L553.1 149.5L558.0 161.7L562.9 173.9L567.8 186.2L572.7 198.4L577.6 210.7L582.5 222.9L587.3 235.1L592.1 247.4L597.0 259.6L601.8 271.9L606.6 284.1L611.4 296.4L616.2 308.6L621.0 320.8L625.8 333.1L630.6 345.3L635.4 357.6L640.2 369.8L645.1 382.0L649.9 394.3L654.7 406.5L659.5 418.8L664.4 431.0L669.2 443.3L674.1 455.5L678.9 467.7L683.8 480.0L688.7 492.2L693.6 504.5L698.5 516.7L703.4 528.9L708.3 541.2L713.3 553.4L718.0 565.0M527.8 76.0L532.8 88.2L537.8 100.5L542.7 112.7L547.6 125.0L552.5 137.2L557.4 149.5L562.3 161.7L567.1 173.9L571.9 186.2L576.7 198.4L581.5 210.7L586.3 222.9L591.1 235.1L595.9 247.4L600.6 259.6L605.4 271.9L610.2 284.1L614.9 296.4L619.7 308.6L624.4 320.8L629.2 333.1L633.9 345.3L638.7 357.6L643.5 369.8L648.2 382.0L653.0 394.3L657.8 406.5L662.6 418.8L667.4 431.0L672.2 443.3L677.0 455.5L681.8 467.7L686.7 480.0L691.5 492.2L696.4 504.5L701.3 516.7L706.2 528.9L711.1 541.2L716.0 553.4L720.7 565.0" stroke="#36b2b4" stroke-width="1" fill="none" shape-rendering="crispEdges"/>
<path d="M311.5 76.5H745.5V565.5H311.5Z" stroke="#dcdcdc" stroke-width="1" fill="none" shape-rendering="crispEdges"/>
<text x="313" y="551" fill="#ecdcb8" font-size="13">-50</text>
<text x="313" y="506" fill="#ecdcb8" font-size="13">-40</text>
<text x="313" y="463" fill="#ecdcb8" font-size="13">-30</text>
<text x="313" y="421" fill="#ecdcb8" font-size="13">-20</text>
<text x="313" y="381" fill="#ecdcb8" font-size="13">-10</text>
<text x="313" y="343" fill="#ecdcb8" font-size="13">0</text>
<text x="313" y="305" fill="#ecdcb8" font-size="13">10</text>
<text x="313" y="270" fill="#ecdcb8" font-size="13">20</text>
<text x="313" y="235" fill="#ecdcb8" font-size="13">30</text>
<text x="313" y="201" fill="#ecdcb8" font-size="13">40</text>
<text x="313" y="169" fill="#ecdcb8" font-size="13">50</text>
<text x="313" y="137" fill="#ecdcb8" font-size="13">60</text>
<text x="313" y="107" fill="#ecdcb8" font-size="13">70</text>
<text x="313" y="77" fill="#ecdcb8" font-size="13">80</text>
<text x="742" y="546" fill="#ecdcb8" font-size="13" text-anchor="end">50</text>
<text x="742" y="515" fill="#ecdcb8" font-size="13" text-anchor="end">60</text>
<text x="742" y="484" fill="#ecdcb8" font-size="13" text-anchor="end">70</text>
<text x="742" y="455" fill="#ecdcb8" font-size="13" text-anchor="end">80</text>
<text x="742" y="426" fill="#ecdcb8" font-size="13" text-anchor="end">90</text>
<text x="742" y="398" fill="#ecdcb8" font-size="13" text-anchor="end">100</text>
<text x="742" y="370" fill="#ecdcb8" font-size="13" text-anchor="end">110</text>
<text x="742" y="344" fill="#ecdcb8" font-size="13" text-anchor="end">120</text>
<text x="742" y="318" fill="#ecdcb8" font-size="13" text-anchor="end">130</text>
<text x="742" y="293" fill="#ecdcb8" font-size="13" text-anchor="end">140</text>
<text x="742" y="268" fill="#ecdcb8" font-size="13" text-anchor="end">150</text>
<text x="742" y="244" fill="#ecdcb8" font-size="13" text-anchor="end">160</text>
<text x="742" y="220" fill="#ecdcb8" font-size="13" text-anchor="end">170</text>
<text x="742" y="197" fill="#ecdcb8" font-size="13" text-anchor="end">180</text>
<text x="332" y="88" fill="#b4d254" font-size="13" textLength="19">0.4</text>
<text x="369" y="88" fill="#b4d254" font-size="13">1</text>
<text x="401" y="88" fill="#b4d254" font-size="13">2</text>
<text x="433" y="88" fill="#b4d254" font-size="13">4</text>
<text x="463" y="88" fill="#b4d254" font-size="13">7</text>
<text x="487" y="88" fill="#b4d254" font-size="13">10</text>
<text x="511" y="88" fill="#b4d254" font-size="13">16</text>
<text x="534" y="88" fill="#b4d254" font-size="13">24</text>
<text x="552" y="88" fill="#b4d254" font-size="13">32</text>
<text x="567" y="88" fill="#b4d254" font-size="13">40</text>
<text x="578" y="88" fill="#b4d254" font-size="13">48</text>
<text x="589" y="88" fill="#b4d254" font-size="13">56</text>
<text x="601" y="88" fill="#b4d254" font-size="13">68</text>
<text x="254" y="81" fill="#e4e4e4" font-size="13">气压</text>
<text x="253" y="97" fill="#e4e4e4" font-size="13" textLength="30">(hPa)</text>
<text x="282" y="81" fill="#e4e4e4" font-size="13">200</text>
<text x="282" y="147" fill="#e4e4e4" font-size="13">250</text>
<text x="282" y="201" fill="#e4e4e4" font-size="13">300</text>
<text x="282" y="246" fill="#e4e4e4" font-size="13">350</text>
<text x="282" y="286" fill="#e4e4e4" font-size="13">400</text>
<text x="282" y="320" fill="#e4e4e4" font-size="13">450</text>
<text x="282" y="352" fill="#e4e4e4" font-size="13">500</text>
<text x="282" y="380" fill="#e4e4e4" font-size="13">550</text>
<text x="282" y="405" fill="#e4e4e4" font-size="13">600</text>
<text x="282" y="429" fill="#e4e4e4" font-size="13">650</text>
<text x="282" y="451" fill="#e4e4e4" font-size="13">700</text>
<text x="282" y="471" fill="#e4e4e4" font-size="13">750</text>
<text x="282" y="490" fill="#e4e4e4" font-size="13">800</text>
<text x="282" y="508" fill="#e4e4e4" font-size="13">850</text>
<text x="282" y="525" fill="#e4e4e4" font-size="13">900</text>
<text x="282" y="541" fill="#e4e4e4" font-size="13">950</text>
<text x="282" y="556" fill="#e4e4e4" font-size="13">1000</text>
<text x="748" y="82" fill="#e4e4e4" font-size="13">高度</text>
<text x="748" y="98" fill="#e4e4e4" font-size="13" textLength="25">(km)</text>
<text x="748" y="201" fill="#e4e4e4" font-size="13" textLength="26">9.72</text>
<text x="748" y="246" fill="#e4e4e4" font-size="13" textLength="26">8.58</text>
<text x="748" y="286" fill="#e4e4e4" font-size="13" textLength="26">7.57</text>
<text x="748" y="320" fill="#e4e4e4" font-size="13" textLength="26">6.67</text>
<text x="748" y="352" fill="#e4e4e4" font-size="13" textLength="26">5.85</text>
<text x="748" y="380" fill="#e4e4e4" font-size="13" textLength="26">5.08</text>
<text x="748" y="405" fill="#e4e4e4" font-size="13" textLength="26">4.38</text>
<text x="748" y="429" fill="#e4e4e4" font-size="13" textLength="26">3.73</text>
<text x="748" y="451" fill="#e4e4e4" font-size="13" textLength="26">3.12</text>
<text x="748" y="471" fill="#e4e4e4" font-size="13" textLength="26">2.54</text>
<text x="748" y="490" fill="#e4e4e4" font-size="13" textLength="26">2.00</text>
<text x="748" y="508" fill="#e4e4e4" font-size="13" textLength="26">1.49</text>
<text x="748" y="525" fill="#e4e4e4" font-size="13" textLength="26">1.00</text>
<text x="748" y="541" fill="#e4e4e4" font-size="13" textLength="26">0.53</text>
<text x="748" y="556" fill="#e4e4e4" font-size="13" textLength="26">0.08</text>
<text x="249" y="581" fill="#f0a45c" font-size="13" textLength="51">温度(℃)</text>
<text x="307" y="581" fill="#f0a45c" font-size="13" textLength="19.5">-50</text>
<text x="351" y="581" fill="#f0a45c" font-size="13" textLength="19.5">-40</text>
<text x="394" y="581" fill="#f0a45c" font-size="13" textLength="19.5">-30</text>
<text x="438" y="581" fill="#f0a45c" font-size="13" textLength="19.5">-20</text>
<text x="481" y="581" fill="#f0a45c" font-size="13" textLength="19.5">-10</text>
<text x="525" y="581" fill="#f0a45c" font-size="13">0</text>
<text x="568" y="581" fill="#f0a45c" font-size="13" textLength="13.0">10</text>
<text x="611" y="581" fill="#f0a45c" font-size="13" textLength="13.0">20</text>
<text x="655" y="581" fill="#f0a45c" font-size="13" textLength="13.0">30</text>
<text x="698" y="581" fill="#f0a45c" font-size="13" textLength="13.0">40</text>
<text x="742" y="581" fill="#f0a45c" font-size="13" textLength="13.0">50</text>
<text x="734" y="595" fill="#e4e4e4" font-size="13" textLength="45">(H:AGL)</text>
<text x="443" y="599" fill="#fff" font-size="16" textLength="175">时间：2021/9/9 7:08:01</text>
<polygon points="390.6,190.2 412.6,190.2 416.8,194.4 430.0,211.2 441.2,231.9 452.5,250.6 460.0,267.5 467.4,284.3" fill="#1f79dc" fill-opacity="0.88"/>
<polygon points="485.0,312.5 496.2,329.4 511.2,348.0 522.5,365.0 530.0,380.0 537.5,395.0 543.7,410.0 551.2,421.2 558.7,436.2 562.5,447.5 570.0,462.5 577.5,477.5 585.9,490.0 597.0,503.5 607.0,517.0 615.0,528.0 615.5,529.0 606.5,513.0 595.0,492.5 583.5,473.7 572.2,453.0 559.3,430.6 546.5,410.0 534.0,386.0 520.0,362.0 500.0,333.0 480.0,303.0" fill="#d41414" fill-opacity="0.9"/>
<polygon points="615.0,528.0 624.0,537.0 637.6,552.4 623.0,541.0" fill="#2a8be0"/>
<polyline points="467.4,284.3 480.0,303.0 500.0,333.0 520.0,362.0 534.0,386.0 546.5,410.0 559.3,430.6 572.2,453.0 583.5,473.7 595.0,492.5 606.5,513.0 615.5,529.0 623.0,541.0" fill="none" stroke="#8fdfee" stroke-width="1.3"/>
<polyline points="390.6,190.2 467.4,284.3" fill="none" stroke="#34c8fc" stroke-width="1.9"/>
<polyline points="625.0,552.0 623.0,541.0" fill="none" stroke="#9ff4f0" stroke-width="1.4"/>
<polyline points="637.6,552.4 623.0,541.0" fill="none" stroke="#e01a1a" stroke-width="1.6"/>
<polyline points="321.2,185.0 328.7,190.6 336.2,201.9 347.5,209.4 360.6,220.6 362.5,233.7 373.7,245.0 381.2,261.8 398.0,280.6 404.4,290.0 411.9,299.4 417.5,310.6 425.0,321.9 441.9,334.0 455.0,343.4 466.2,350.0 475.6,361.2 485.0,372.5 500.0,383.7 515.0,398.7 525.0,410.0 536.2,419.4 543.7,434.4 547.5,451.2 558.7,464.4 560.6,475.6 566.7,490.0 570.0,499.0 572.4,510.0 580.0,516.0 584.7,523.7 597.0,533.9 607.0,541.7 615.0,548.5 625.0,551.9" fill="none" stroke="#3ec832" stroke-width="2" stroke-linejoin="round"/>
<polyline points="406.5,184.0 416.8,194.4 430.0,211.2 441.2,231.9 452.5,250.6 460.0,267.5 467.4,284.3 473.0,295.6 477.5,299.4 485.0,312.5 496.2,329.4 511.2,348.0 522.5,365.0 530.0,380.0 537.5,395.0 543.7,410.0 551.2,421.2 558.7,436.2 562.5,447.5 570.0,462.5 577.5,477.5 585.9,490.0 597.0,503.5 607.0,517.0 615.0,528.0 624.0,537.0 637.6,552.4" fill="none" stroke="#e01a1a" stroke-width="2.6" stroke-linejoin="round"/></svg>
<div class="a" style="left:879px;top:65px;width:181px;height:544px;background:#000"></div>
<div class="a" style="left:879px;top:65px;width:165px;height:18px;background:#737373;border-top:1px solid #e8e8e8;border-left:1px solid #e8e8e8;box-sizing:border-box"></div>
<div class="a" style="left:948px;top:66px;width:1px;height:17px;background:#9a9a9a"></div>
<div class="t" style="left:940px;top:63px;width:96px;text-align:center;font-family:'Liberation Serif','Noto Serif CJK SC',serif;font-size:15px;font-weight:bold;line-height:22px;color:#000">特征层</div>
<div class="a" style="left:949px;top:83px;width:95px;height:22px;background:#3399ff"></div>
<div class="a" style="left:879px;top:105px;width:165px;height:1px;background:#a6a6a6"></div>
<div class="t" style="left:905px;top:83px;width:38.5px;overflow:hidden;font-family:'Liberation Serif','Noto Serif CJK SC',serif;font-size:15px;font-weight:bold;line-height:22px;color:#f5a51f"><span style="display:inline-block;transform:scaleX(0.800);transform-origin:0 50%">LCL_H</span></div>
<div class="t" style="left:949px;top:84px;width:95px;text-align:center;font-family:'Liberation Serif','Noto Serif CJK SC',serif;font-size:14px;line-height:22px;color:#fff;letter-spacing:0.44px">0.39 km</div>
<div class="a" style="left:879px;top:128px;width:165px;height:1px;background:#a6a6a6"></div>
<div class="t" style="left:905px;top:106px;width:38.5px;overflow:hidden;font-family:'Liberation Serif','Noto Serif CJK SC',serif;font-size:15px;font-weight:bold;line-height:22px;color:#f5a51f"><span style="display:inline-block;transform:scaleX(0.842);transform-origin:0 50%">LCL_P</span></div>
<div class="t" style="left:949px;top:107px;width:95px;text-align:center;font-family:'Liberation Serif','Noto Serif CJK SC',serif;font-size:14px;line-height:22px;color:#fff;letter-spacing:0.70px">964.86 hPa</div>
<div class="a" style="left:879px;top:151px;width:165px;height:1px;background:#a6a6a6"></div>
<div class="t" style="left:905px;top:129px;width:38.5px;overflow:hidden;font-family:'Liberation Serif','Noto Serif CJK SC',serif;font-size:15px;font-weight:bold;line-height:22px;color:#f5a51f"><span style="display:inline-block;transform:scaleX(0.827);transform-origin:0 50%">LCL_T</span></div>
<div class="t" style="left:949px;top:130px;width:95px;text-align:center;font-family:'Liberation Serif','Noto Serif CJK SC',serif;font-size:14px;line-height:22px;color:#fff;letter-spacing:0.70px">21.66 <span style="font-family:'Noto Serif CJK SC',serif;font-size:14px">℃</span></div>
<div class="a" style="left:879px;top:174px;width:165px;height:1px;background:#a6a6a6"></div>
<div class="t" style="left:905px;top:152px;width:38.5px;overflow:hidden;font-family:'Liberation Serif','Noto Serif CJK SC',serif;font-size:15px;font-weight:bold;line-height:22px;color:#f5a51f"><span style="display:inline-block;transform:scaleX(0.857);transform-origin:0 50%">LFC_P</span></div>
<div class="t" style="left:949px;top:153px;width:95px;text-align:center;font-family:'Liberation Serif','Noto Serif CJK SC',serif;font-size:14px;line-height:22px;color:#fff;letter-spacing:0.70px">948.00 hPa</div>
<div class="a" style="left:879px;top:197px;width:165px;height:1px;background:#a6a6a6"></div>
<div class="t" style="left:905px;top:175px;width:38.5px;overflow:hidden;font-family:'Liberation Serif','Noto Serif CJK SC',serif;font-size:15px;font-weight:bold;line-height:22px;color:#f5a51f"><span style="display:inline-block;transform:scaleX(0.842);transform-origin:0 50%">ELC_P</span></div>
<div class="t" style="left:949px;top:176px;width:95px;text-align:center;font-family:'Liberation Serif','Noto Serif CJK SC',serif;font-size:14px;line-height:22px;color:#fff;letter-spacing:0.70px">395.00 hPa</div>
<div class="a" style="left:879px;top:220px;width:165px;height:1px;background:#a6a6a6"></div>
<div class="t" style="left:905px;top:198px;width:38.5px;overflow:hidden;font-family:'Liberation Serif','Noto Serif CJK SC',serif;font-size:15px;font-weight:bold;line-height:22px;color:#f5a51f"><span style="display:inline-block;transform:scaleX(0.758);transform-origin:0 50%">BLH</span></div>
<div class="t" style="left:949px;top:199px;width:95px;text-align:center;font-family:'Liberation Serif','Noto Serif CJK SC',serif;font-size:14px;line-height:22px;color:#fff;letter-spacing:0.44px">1.05 km</div>
<div class="a" style="left:879px;top:243px;width:165px;height:1px;background:#a6a6a6"></div>
<div class="t" style="left:905px;top:221px;width:38.5px;overflow:hidden;font-family:'Liberation Serif','Noto Serif CJK SC',serif;font-size:15px;font-weight:bold;line-height:22px;color:#f5a51f"><span style="display:inline-block;transform:scaleX(0.823);transform-origin:0 50%">ZH0</span></div>
<div class="t" style="left:949px;top:222px;width:95px;text-align:center;font-family:'Liberation Serif','Noto Serif CJK SC',serif;font-size:14px;line-height:22px;color:#fff;letter-spacing:0.44px">4.98 km</div>
<div class="a" style="left:879px;top:266px;width:165px;height:1px;background:#a6a6a6"></div>
<div class="t" style="left:905px;top:244px;width:38.5px;overflow:hidden;font-family:'Liberation Serif','Noto Serif CJK SC',serif;font-size:15px;font-weight:bold;line-height:22px;color:#f5a51f"><span style="display:inline-block;transform:scaleX(0.873);transform-origin:0 50%">ZH20</span></div>
<div class="t" style="left:949px;top:245px;width:95px;text-align:center;font-family:'Liberation Serif','Noto Serif CJK SC',serif;font-size:14px;line-height:22px;color:#fff;letter-spacing:0.44px">8.79 km</div>
<div class="a" style="left:949px;top:267px;width:95px;height:22px;background:#f2c99a"></div>
<div class="a" style="left:879px;top:289px;width:165px;height:1px;background:#a6a6a6"></div>
<div class="t" style="left:949px;top:268px;width:95px;text-align:center;font-family:'Liberation Serif','Noto Serif CJK SC',serif;font-size:14px;line-height:22px;color:#e81c1c;letter-spacing:0">热力参数</div>
<div class="a" style="left:879px;top:312px;width:165px;height:1px;background:#a6a6a6"></div>
<div class="t" style="left:905px;top:291px;width:38.5px;height:21px;overflow:hidden;white-space:normal;word-break:break-all;font-family:'Liberation Serif','Noto Serif CJK SC',serif;font-size:15px;font-weight:bold;line-height:15px;color:#f5a51f;letter-spacing:0">A指数</div>
<div class="t" style="left:949px;top:291px;width:95px;text-align:center;font-family:'Liberation Serif','Noto Serif CJK SC',serif;font-size:14px;line-height:22px;color:#fff;letter-spacing:1.17px">-0.69 <span style="font-family:'Noto Serif CJK SC',serif;font-size:14px">℃</span></div>
<div class="a" style="left:879px;top:335px;width:165px;height:1px;background:#a6a6a6"></div>
<div class="t" style="left:905px;top:313px;width:38.5px;overflow:hidden;font-family:'Liberation Serif','Noto Serif CJK SC',serif;font-size:15px;font-weight:bold;line-height:22px;color:#f5a51f"><span style="display:inline-block;transform:scaleX(0.800);transform-origin:0 50%">TT</span></div>
<div class="t" style="left:949px;top:314px;width:95px;text-align:center;font-family:'Liberation Serif','Noto Serif CJK SC',serif;font-size:14px;line-height:22px;color:#fff;letter-spacing:0.70px">34.00</div>
<div class="a" style="left:879px;top:358px;width:165px;height:1px;background:#a6a6a6"></div>
<div class="t" style="left:905px;top:336px;width:38.5px;overflow:hidden;font-family:'Liberation Serif','Noto Serif CJK SC',serif;font-size:15px;font-weight:bold;line-height:22px;color:#f5a51f"><span style="display:inline-block;transform:scaleX(0.768);transform-origin:0 50%">CT</span></div>
<div class="t" style="left:949px;top:337px;width:95px;text-align:center;font-family:'Liberation Serif','Noto Serif CJK SC',serif;font-size:14px;line-height:22px;color:#fff;letter-spacing:0.70px">14.00</div>
<div class="a" style="left:879px;top:381px;width:165px;height:1px;background:#a6a6a6"></div>
<div class="t" style="left:905px;top:359px;width:38.5px;overflow:hidden;font-family:'Liberation Serif','Noto Serif CJK SC',serif;font-size:15px;font-weight:bold;line-height:22px;color:#f5a51f"><span style="display:inline-block;transform:scaleX(0.914);transform-origin:0 50%">KI</span></div>
<div class="t" style="left:949px;top:360px;width:95px;text-align:center;font-family:'Liberation Serif','Noto Serif CJK SC',serif;font-size:14px;line-height:22px;color:#fff;letter-spacing:0.70px">26.09</div>
<div class="a" style="left:879px;top:404px;width:165px;height:1px;background:#a6a6a6"></div>
<div class="t" style="left:905px;top:382px;width:38.5px;overflow:hidden;font-family:'Liberation Serif','Noto Serif CJK SC',serif;font-size:15px;font-weight:bold;line-height:22px;color:#f5a51f"><span style="display:inline-block;transform:scaleX(0.620);transform-origin:0 50%">MK</span></div>
<div class="t" style="left:949px;top:383px;width:95px;text-align:center;font-family:'Liberation Serif','Noto Serif CJK SC',serif;font-size:14px;line-height:22px;color:#fff;letter-spacing:0.70px">37.37</div>
<div class="a" style="left:879px;top:427px;width:165px;height:1px;background:#a6a6a6"></div>
<div class="t" style="left:905px;top:405px;width:38.5px;overflow:hidden;font-family:'Liberation Serif','Noto Serif CJK SC',serif;font-size:15px;font-weight:bold;line-height:22px;color:#f5a51f"><span style="display:inline-block;transform:scaleX(0.873);transform-origin:0 50%">DCI</span></div>
<div class="t" style="left:949px;top:406px;width:95px;text-align:center;font-family:'Liberation Serif','Noto Serif CJK SC',serif;font-size:14px;line-height:22px;color:#fff;letter-spacing:0.70px">25.79 <span style="font-family:'Noto Serif CJK SC',serif;font-size:14px">℃</span></div>
<div class="a" style="left:879px;top:450px;width:165px;height:1px;background:#a6a6a6"></div>
<div class="t" style="left:905px;top:428px;width:38.5px;overflow:hidden;font-family:'Liberation Serif','Noto Serif CJK SC',serif;font-size:15px;font-weight:bold;line-height:22px;color:#f5a51f"><span style="display:inline-block;transform:scaleX(0.686);transform-origin:0 50%">KO</span></div>
<div class="t" style="left:949px;top:429px;width:95px;text-align:center;font-family:'Liberation Serif','Noto Serif CJK SC',serif;font-size:14px;line-height:22px;color:#fff;letter-spacing:1.17px">-2.79</div>
<div class="a" style="left:879px;top:473px;width:165px;height:1px;background:#a6a6a6"></div>
<div class="t" style="left:905px;top:451px;width:38.5px;overflow:hidden;font-family:'Liberation Serif','Noto Serif CJK SC',serif;font-size:15px;font-weight:bold;line-height:22px;color:#f5a51f"><span style="display:inline-block;transform:scaleX(1.279);transform-origin:0 50%">Si</span></div>
<div class="t" style="left:949px;top:452px;width:95px;text-align:center;font-family:'Liberation Serif','Noto Serif CJK SC',serif;font-size:14px;line-height:22px;color:#fff;letter-spacing:0.70px">24.33 <span style="font-family:'Noto Serif CJK SC',serif;font-size:14px">℃</span></div>
<div class="a" style="left:879px;top:496px;width:165px;height:1px;background:#a6a6a6"></div>
<div class="t" style="left:905px;top:474px;width:38.5px;overflow:hidden;font-family:'Liberation Serif','Noto Serif CJK SC',serif;font-size:15px;font-weight:bold;line-height:22px;color:#f5a51f"><span style="display:inline-block;transform:scaleX(1.128);transform-origin:0 50%">SI</span></div>
<div class="t" style="left:949px;top:475px;width:95px;text-align:center;font-family:'Liberation Serif','Noto Serif CJK SC',serif;font-size:14px;line-height:22px;color:#fff;letter-spacing:0.88px">6.86</div>
<div class="a" style="left:879px;top:519px;width:165px;height:1px;background:#a6a6a6"></div>
<div class="t" style="left:905px;top:497px;width:38.5px;overflow:hidden;font-family:'Liberation Serif','Noto Serif CJK SC',serif;font-size:15px;font-weight:bold;line-height:22px;color:#f5a51f"><span style="display:inline-block;transform:scaleX(0.853);transform-origin:0 50%">BDNI</span></div>
<div class="t" style="left:949px;top:498px;width:95px;text-align:center;font-family:'Liberation Serif','Noto Serif CJK SC',serif;font-size:14px;line-height:22px;color:#fff;letter-spacing:0.76px">111.52</div>
<div class="a" style="left:949px;top:520px;width:95px;height:22px;background:#fcecdc"></div>
<div class="a" style="left:879px;top:542px;width:165px;height:1px;background:#a6a6a6"></div>
<div class="t" style="left:949px;top:521px;width:95px;text-align:center;font-family:'Liberation Serif','Noto Serif CJK SC',serif;font-size:14px;line-height:22px;color:#d62020;letter-spacing:0">动力参数</div>
<div class="a" style="left:949px;top:543px;width:95px;height:22px;background:#fcecdc"></div>
<div class="a" style="left:879px;top:565px;width:165px;height:1px;background:#a6a6a6"></div>
<div class="t" style="left:905px;top:543px;width:38.5px;overflow:hidden;font-family:'Liberation Serif','Noto Serif CJK SC',serif;font-size:15px;font-weight:bold;line-height:22px;color:#f5a51f"><span style="display:inline-block;transform:scaleX(0.784);transform-origin:0 50%">CAPE</span></div>
<div class="t" style="left:949px;top:544px;width:95px;text-align:center;font-family:'Liberation Serif','Noto Serif CJK SC',serif;font-size:14px;line-height:22px;color:#d62020;letter-spacing:1.06px">216.81 J/kg</div>
<div class="a" style="left:949px;top:566px;width:95px;height:22px;background:#4682b4"></div>
<div class="a" style="left:879px;top:588px;width:165px;height:1px;background:#a6a6a6"></div>
<div class="t" style="left:905px;top:566px;width:38.5px;overflow:hidden;font-family:'Liberation Serif','Noto Serif CJK SC',serif;font-size:15px;font-weight:bold;line-height:22px;color:#f5a51f"><span style="display:inline-block;transform:scaleX(0.873);transform-origin:0 50%">CIN</span></div>
<div class="t" style="left:949px;top:567px;width:95px;text-align:center;font-family:'Liberation Serif','Noto Serif CJK SC',serif;font-size:14px;line-height:22px;color:#fff;letter-spacing:1.17px">-300.68 J/kg</div>
<div class="a" style="left:879px;top:83px;width:1px;height:508px;background:#a6a6a6"></div>
<div class="a" style="left:948px;top:83px;width:1px;height:508px;background:#a6a6a6"></div>
<svg class="a" style="left:884px;top:89px" width="8" height="12"><path d="M0 0L5.200 4.700L0 9.400Z" fill="#f5a51f"/></svg>
<div class="a" style="left:1044px;top:65px;width:17px;height:544px;background:#f1f1f1"></div>
<div class="a" style="left:1045.5px;top:83px;width:14px;height:239px;border:1px solid #b4b6bc;border-radius:2px;box-sizing:border-box;background:linear-gradient(90deg,#f6f6f6,#e2e3e6 60%,#d4d5d9)"></div>
<svg class="a" style="left:1045px;top:65px" width="15" height="544"><path d="M3.500 12L7.500 7.500L11.500 12Z M3.500 515L11.500 515L7.500 519.500Z" fill="#444"/><path d="M4.500 136.500H10.500M4.500 138.500H10.500M4.500 140.500H10.500" stroke="#555" stroke-width="1"/></svg>
<div class="a" style="left:879px;top:591px;width:165px;height:18px;background:#f1f1f1"></div>
<div class="a" style="left:898px;top:593px;width:120px;height:14px;border:1px solid #b4b6bc;border-radius:2px;box-sizing:border-box;background:linear-gradient(#f6f6f6,#e2e3e6 60%,#d4d5d9)"></div>
<svg class="a" style="left:879px;top:591px" width="166" height="18"><path d="M10 5L5.500 9L10 13Z M156 5L160.500 9L156 13Z" fill="#444"/><path d="M76.500 6V12M78.500 6V12M80.500 6V12" stroke="#555" stroke-width="1"/></svg>
<div class="t" style="left:288px;top:635px;font-size:14px;font-weight:bold;line-height:22px;color:#3fd13a;letter-spacing:-0.5px">2021/9/9 0:00:01</div>
<div class="t" style="left:864px;top:635px;font-size:14px;font-weight:bold;line-height:22px;color:#3fd13a;letter-spacing:-0.53px">2021/9/9 16:42:01</div>
<div class="t" style="left:586px;top:615px;font-size:16px;font-weight:bold;line-height:22px;color:#48dc98;letter-spacing:-0.4px">2021/9/9 7:08:01</div>
<svg class="a" style="left:391px;top:642px" width="471" height="8"><defs><linearGradient id="sg" x1="0" x2="1" y1="0" y2="0"><stop offset="0" stop-color="#118a8e"/><stop offset="0.25" stop-color="#1f979b"/><stop offset="0.45" stop-color="#58b2b6"/><stop offset="0.75" stop-color="#a8dede"/><stop offset="1" stop-color="#ecfbfb"/></linearGradient><linearGradient id="sb" x1="0" x2="1" y1="0" y2="0"><stop offset="0" stop-color="#0e7c80"/><stop offset="0.5" stop-color="#22a8ae"/><stop offset="1" stop-color="#3ad0d8"/></linearGradient><linearGradient id="sz" x1="0" x2="1" y1="0" y2="0"><stop offset="0" stop-color="#7fd0d2" stop-opacity="0"/><stop offset="0.2" stop-color="#8fd8da"/><stop offset="0.6" stop-color="#8cc4c6"/><stop offset="1" stop-color="#b09a9a"/></linearGradient></defs><rect x="0" y="0" width="471" height="8" rx="1.5" fill="url(#sb)"/><rect x="1" y="1" width="469" height="6" rx="1" fill="url(#sg)"/><path d="M80 5.5L83 2.5L86 5.5L89 2.5L92 5.5L95 2.5L98 5.5L101 2.5L104 5.5L107 2.5L110 5.5L113 2.5L116 5.5L119 2.5L122 5.5L125 2.5L128 5.5L131 2.5L134 5.5L137 2.5L140 5.5L143 2.5L146 5.5L149 2.5L152 5.5L155 2.5L158 5.5L161 2.5L164 5.5L167 2.5L170 5.5L173 2.5L176 5.5L179 2.5L182 5.5L185 2.5L188 5.5L191 2.5L194 5.5L197 2.5L200 5.5L203 2.5L206 5.5L209 2.5L212 5.5L215 2.5L218 5.5L221 2.5L224 5.5L227 2.5L230 5.5L233 2.5L236 5.5L239 2.5L242 5.5L245 2.5L248 5.5L251 2.5L254 5.5L257 2.5L260 5.5L263 2.5L266 5.5L269 2.5L272 5.5L275 2.5L278 5.5L281 2.5L284 5.5L287 2.5L290 5.5L293 2.5L296 5.5L299 2.5L302 5.5L305 2.5L308 5.5L311 2.5L314 5.5L317 2.5L320 5.5L323 2.5L326 5.5L329 2.5L332 5.5L335 2.5L338 5.5L341 2.5L344 5.5L347 2.5L350 5.5L353 2.5L356 5.5L359 2.5L362 5.5L365 2.5L368 5.5L371 2.5L374 5.5L377 2.5L380 5.5L383 2.5L386 5.5L389 2.5L392 5.5L395 2.5L398 5.5L401 2.5L404 5.5L407 2.5L410 5.5L413 2.5L416 5.5L419 2.5L422 5.5L425 2.5L428 5.5L431 2.5L434 5.5L437 2.5L440 5.5L443 2.5L446 5.5L449 2.5L452 5.5L455 2.5L458 5.5L461 2.5L464 5.5L467 2.5" stroke="url(#sz)" stroke-width="0.9" fill="none"/><path d="M1 1.5H470M1 6.500H470" stroke="#a4f0f0" stroke-width="1" fill="none" opacity="0.9"/></svg>
<svg class="a" style="left:585px;top:635px" width="14" height="23"><defs><linearGradient id="tg" x1="0" x2="0" y1="0" y2="1"><stop offset="0" stop-color="#b4baba"/><stop offset="0.3" stop-color="#8fa4a6"/><stop offset="0.52" stop-color="#1d8a90"/><stop offset="0.7" stop-color="#7d9c9e"/><stop offset="1" stop-color="#a4acac"/></linearGradient></defs><path d="M0.500 7.500L6.500 1L12.500 7.500V22H0.500Z" fill="url(#tg)" stroke="#b8f2f2" stroke-width="1"/></svg>
<div class="a" style="left:242px;top:669px;width:822px;height:36px;background:#6e8298"></div>
<div class="t" style="left:245.0px;top:669px;width:70.5px;height:34.5px;box-sizing:border-box;border:2px solid #eef1f4;border-radius:2px;background:linear-gradient(#ccd3da 0,#bcc5ce 30%,#8f9ba8 52%,#a3aebb 70%,#c3ccd6 100%);text-align:center;font-family:'Liberation Serif','Noto Serif CJK SC',serif;font-size:15px;font-weight:bold;line-height:30px;color:#7d7d7d;letter-spacing:0;overflow:hidden">垂直廓线</div>
<div class="t" style="left:317.5px;top:669px;width:99.0px;height:34.5px;box-sizing:border-box;border:2px solid #eef1f4;border-radius:2px;background:linear-gradient(#ccd3da 0,#bcc5ce 30%,#8f9ba8 52%,#a3aebb 70%,#c3ccd6 100%);text-align:center;font-family:'Liberation Serif','Noto Serif CJK SC',serif;font-size:15px;font-weight:bold;line-height:30px;color:#7d7d7d;letter-spacing:0;overflow:hidden">时间高度剖面</div>
<div class="t" style="left:419.5px;top:669px;width:99.0px;height:34.5px;box-sizing:border-box;border:2px solid #eef1f4;border-radius:2px;background:linear-gradient(#ccd3da 0,#bcc5ce 30%,#8f9ba8 52%,#a3aebb 70%,#c3ccd6 100%);text-align:center;font-family:'Liberation Serif','Noto Serif CJK SC',serif;font-size:15px;font-weight:bold;line-height:30px;color:#7d7d7d;letter-spacing:0;overflow:hidden">亮温变化曲线</div>
<div class="t" style="left:521.5px;top:669px;width:100.0px;height:34.5px;box-sizing:border-box;border:2px solid #eef1f4;border-radius:2px;background:linear-gradient(#a9bdd2 0,#8eaac6 30%,#5e84ac 52%,#6f93b8 70%,#9cb8d2 100%);text-align:center;font-family:'Liberation Serif','Noto Serif CJK SC',serif;font-size:15px;font-weight:bold;line-height:30px;color:#f4dc28;letter-spacing:0;overflow:hidden">T-LogP图分析</div>
<div class="t" style="left:624.5px;top:669px;width:99.5px;height:34.5px;box-sizing:border-box;border:2px solid #eef1f4;border-radius:2px;background:linear-gradient(#ccd3da 0,#bcc5ce 30%,#8f9ba8 52%,#a3aebb 70%,#c3ccd6 100%);text-align:center;font-family:'Liberation Serif','Noto Serif CJK SC',serif;font-size:15px;font-weight:bold;line-height:30px;color:#7d7d7d;letter-spacing:0;overflow:hidden">地面要素演变</div>
<div class="t" style="left:727.0px;top:669px;width:98.5px;height:34.5px;box-sizing:border-box;border:2px solid #eef1f4;border-radius:2px;background:linear-gradient(#ccd3da 0,#bcc5ce 30%,#8f9ba8 52%,#a3aebb 70%,#c3ccd6 100%);text-align:center;font-family:'Liberation Serif','Noto Serif CJK SC',serif;font-size:15px;font-weight:bold;line-height:30px;color:#7d7d7d;letter-spacing:0;overflow:hidden">天气指数分析</div>
<div class="t" style="left:828.5px;top:669px;width:99.5px;height:34.5px;box-sizing:border-box;border:2px solid #eef1f4;border-radius:2px;background:linear-gradient(#ccd3da 0,#bcc5ce 30%,#8f9ba8 52%,#a3aebb 70%,#c3ccd6 100%);text-align:center;font-family:'Liberation Serif','Noto Serif CJK SC',serif;font-size:15px;font-weight:bold;line-height:30px;color:#7d7d7d;letter-spacing:0;overflow:hidden">多站数据分析</div>
<div class="a" style="left:5px;top:712px;width:1057px;height:1px;background:#dfe7ef"></div>
<div class="a" style="left:5px;top:713px;width:372px;height:3.5px;background:#4682b4"></div>
<div class="a" style="left:5px;top:716.5px;width:372px;height:3.5px;background:linear-gradient(90deg,#1c2418 0,#3a1c24 30%,#1c2040 60%,#2a1c28 100%)"></div>
<div class="a" style="left:377px;top:712px;width:685px;height:6px;background:#f0f0f0"></div>
<div class="a" style="left:377px;top:718px;width:685px;height:2px;background:#101010"></div>
</body></html>
